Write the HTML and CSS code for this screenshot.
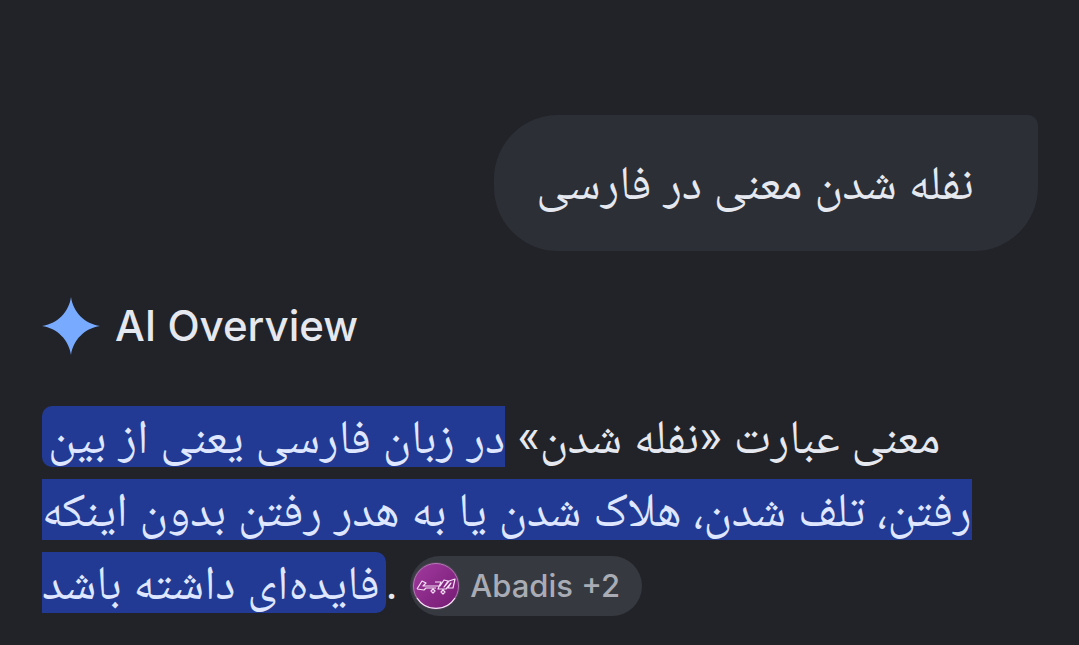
FILE: index.html
```html
<!DOCTYPE html>
<html lang="en">
<head>
<meta charset="utf-8">
<meta name="viewport" content="width=device-width, initial-scale=1">
<title>AI Overview</title>
<link rel="stylesheet" href="styles.css">
</head>
<body>
<main class="page">
  <p class="query" dir="rtl" lang="fa">نفله شدن معنی در فارسی</p>
  <section class="overview">
    <h1 class="title">
      <svg class="spark" viewBox="0 0 58 58" aria-hidden="true"><path fill="#78aaff" d="M29 0C31 15 43 27 58 29C43 31 31 43 29 58C27 43 15 31 0 29C15 27 27 15 29 0Z"/></svg>
      AI Overview
    </h1>
    <div class="answer" lang="fa">
      <p class="line" dir="rtl"><span class="lead">معنی عبارت «نفله شدن»</span> <mark class="mark mark-first">در زبان فارسی یعنی از بین</mark></p>
      <p class="line" dir="rtl"><mark class="mark">رفتن، تلف شدن، هلاک شدن یا به هدر رفتن بدون اینکه</mark></p>
      <div class="line"><mark class="mark mark-last" dir="rtl">فایده‌ای داشته باشد</mark><span class="stop">.</span>
        <button class="source" type="button" lang="en">
          <svg class="logo" viewBox="0 0 48 48" aria-hidden="true">
            <defs><linearGradient id="plum" x1="0" y1="0" x2="1" y2="1"><stop offset="0" stop-color="#a23a9f"/><stop offset="1" stop-color="#741a72"/></linearGradient></defs>
            <circle cx="24" cy="24" r="24" fill="#4c4353"/>
            <circle cx="24" cy="24" r="22.500" fill="url(#plum)" stroke="#b678b7"/>
            <path d="M5 36A22.500 22.500 0 0 0 43 36" fill="none" stroke="#f5e4f5" stroke-width="1.3"/>
            <path d="M5 27L10 19L14 21L11 24H28L32 18L36 19L32 25L37 19L43 17L41 26L36 26L39 21L34 27L26 27L29 20H23M5 27L12 28L14 26H24M21 27l2 2-2 2-2-2zM31 28l2 2-2 2-2-2z" fill="none" stroke="#f5dff5" stroke-width="1.2" stroke-linejoin="round"/>
          </svg>
          <span>Abadis +2</span>
        </button>
      </div>
    </div>
  </section>
</main>
</body>
</html>
```
FILE: styles.css
```css
* { box-sizing: border-box; }
body {
  margin: 0;
  background: #222328;
  color: #e6e8f0;
  font-family: Inter, sans-serif;
}
.page {
  display: flex;
  flex-direction: column;
  padding: 115px 41px 24px 42px;
}
.query {
  align-self: flex-end;
  margin: 0;
  padding: 32px 64px 32px 42px;
  border-radius: 64px 10px 64px 64px;
  background: #2c2f36;
  font: 48px/72px Roboto, "Noto Naskh Arabic", sans-serif;
}
.title {
  display: flex;
  align-items: center;
  gap: 15px;
  margin: 46px 0 0;
  font: 500 42px/56px "Google Sans", Inter, sans-serif;
}
.spark { width: 58px; height: 58px; }
.answer {
  display: flex;
  flex-direction: column;
  align-items: flex-start;
  gap: 12px;
  margin-top: 51px;
  font: 48px/61px Roboto, "Noto Naskh Arabic", sans-serif;
  white-space: nowrap;
}
.line { display: flex; height: 61px; margin: 0; }
.lead { margin-left: 12px; }
.mark { background: #223a94; color: #dfe6ff; }
.mark-first { border-radius: 10px 0 0 10px; padding-left: 6px; }
.mark-last { border-radius: 0 10px 10px 0; padding-right: 6px; }
.source {
  display: flex;
  align-items: center;
  gap: 10px;
  height: 60px;
  margin: 4px 0 0 12px;
  padding: 0 22px 0 2px;
  border: 0;
  border-radius: 30px;
  background: #363940;
  color: #a9acb5;
  font: 500 31px/60px "Google Sans", Inter, sans-serif;
}
.logo { width: 48px; height: 48px; }
```
